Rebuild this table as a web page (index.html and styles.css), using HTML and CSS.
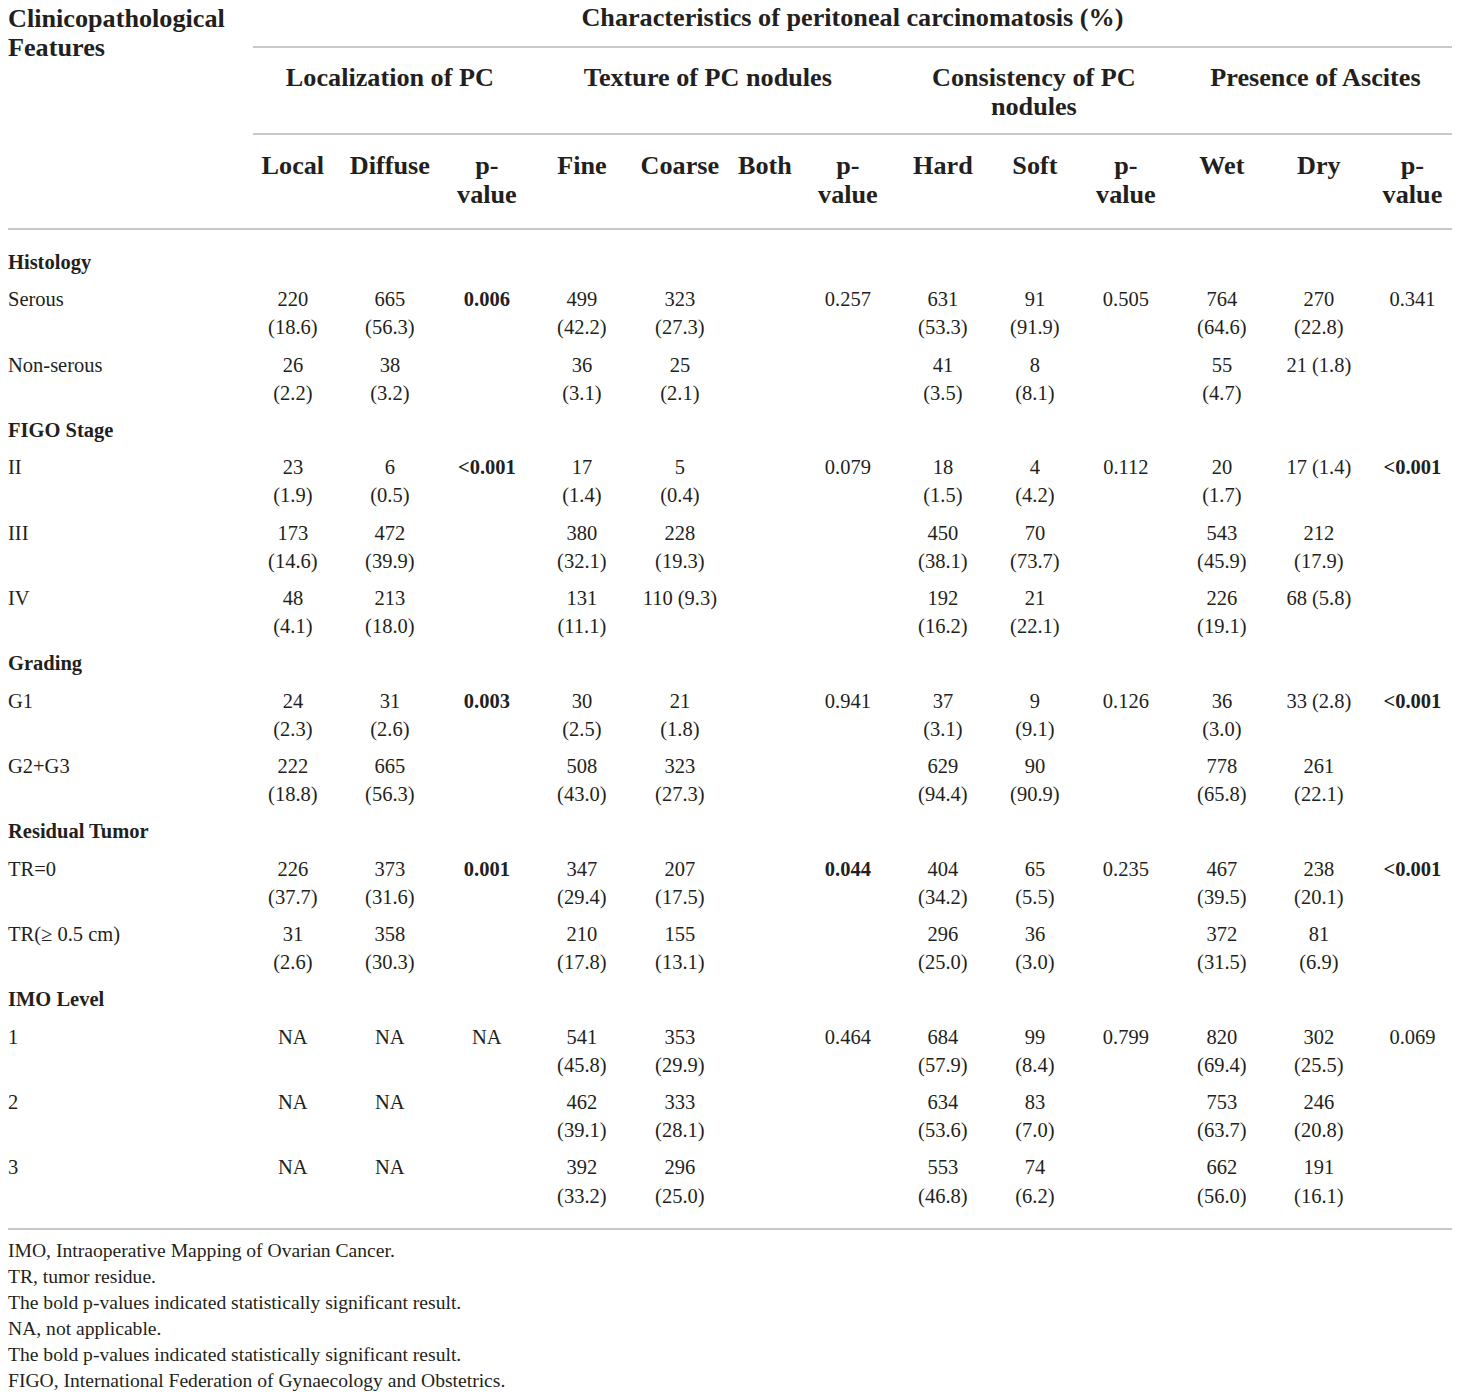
FILE: index.html
```html
<!DOCTYPE html>
<html lang="en">
<head>
  <meta charset="UTF-8">
  <title>Characteristics of peritoneal carcinomatosis</title>
  <link rel="stylesheet" href="styles.css">
</head>
<body>

  <div class="table-wrap">
    <table class="pc-table">
      <colgroup>
        <col class="c-label">
        <col style="width:80px"><col style="width:114px"><col style="width:80px">
        <col style="width:110px"><col style="width:86px"><col style="width:84px"><col style="width:82px">
        <col style="width:108px"><col style="width:76px"><col style="width:106px">
        <col style="width:86px"><col style="width:108px"><col style="width:79px">
      </colgroup>
      <thead>
        <tr class="head-1">
          <th class="label-head" rowspan="3">Clinicopathological<br>Features</th>
          <th colspan="13" class="ruled">Characteristics of peritoneal carcinomatosis (%)</th>
        </tr>
        <tr class="head-2">
          <th colspan="3" class="ruled">Localization of PC</th>
          <th colspan="4" class="ruled">Texture of PC nodules</th>
          <th colspan="3" class="ruled">Consistency of PC<br>nodules</th>
          <th colspan="3" class="ruled">Presence of Ascites</th>
        </tr>
        <tr class="head-3">
          <th>Local</th>
          <th>Diffuse</th>
          <th>p-<br>value</th>
          <th>Fine</th>
          <th>Coarse</th>
          <th>Both</th>
          <th>p-<br>value</th>
          <th>Hard</th>
          <th>Soft</th>
          <th>p-<br>value</th>
          <th>Wet</th>
          <th>Dry</th>
          <th>p-<br>value</th>
        </tr>
      </thead>
      <tbody>
        <tr class="section first">
          <td colspan="14">Histology</td>
        </tr>
        <tr>
          <td>Serous</td>
          <td>220<br>(18.6)</td><td>665<br>(56.3)</td><td><b>0.006</b></td>
          <td>499<br>(42.2)</td><td>323<br>(27.3)</td><td></td><td>0.257</td>
          <td>631<br>(53.3)</td><td>91<br>(91.9)</td><td>0.505</td>
          <td>764<br>(64.6)</td><td>270<br>(22.8)</td><td>0.341</td>
        </tr>
        <tr>
          <td>Non-serous</td>
          <td>26<br>(2.2)</td><td>38<br>(3.2)</td><td></td>
          <td>36<br>(3.1)</td><td>25<br>(2.1)</td><td></td><td></td>
          <td>41<br>(3.5)</td><td>8<br>(8.1)</td><td></td>
          <td>55<br>(4.7)</td><td>21 (1.8)</td><td></td>
        </tr>
        <tr class="section">
          <td colspan="14">FIGO Stage</td>
        </tr>
        <tr>
          <td>II</td>
          <td>23<br>(1.9)</td><td>6<br>(0.5)</td><td><b>&lt;0.001</b></td>
          <td>17<br>(1.4)</td><td>5<br>(0.4)</td><td></td><td>0.079</td>
          <td>18<br>(1.5)</td><td>4<br>(4.2)</td><td>0.112</td>
          <td>20<br>(1.7)</td><td>17 (1.4)</td><td><b>&lt;0.001</b></td>
        </tr>
        <tr>
          <td>III</td>
          <td>173<br>(14.6)</td><td>472<br>(39.9)</td><td></td>
          <td>380<br>(32.1)</td><td>228<br>(19.3)</td><td></td><td></td>
          <td>450<br>(38.1)</td><td>70<br>(73.7)</td><td></td>
          <td>543<br>(45.9)</td><td>212<br>(17.9)</td><td></td>
        </tr>
        <tr>
          <td>IV</td>
          <td>48<br>(4.1)</td><td>213<br>(18.0)</td><td></td>
          <td>131<br>(11.1)</td><td>110 (9.3)</td><td></td><td></td>
          <td>192<br>(16.2)</td><td>21<br>(22.1)</td><td></td>
          <td>226<br>(19.1)</td><td>68 (5.8)</td><td></td>
        </tr>
        <tr class="section">
          <td colspan="14">Grading</td>
        </tr>
        <tr>
          <td>G1</td>
          <td>24<br>(2.3)</td><td>31<br>(2.6)</td><td><b>0.003</b></td>
          <td>30<br>(2.5)</td><td>21<br>(1.8)</td><td></td><td>0.941</td>
          <td>37<br>(3.1)</td><td>9<br>(9.1)</td><td>0.126</td>
          <td>36<br>(3.0)</td><td>33 (2.8)</td><td><b>&lt;0.001</b></td>
        </tr>
        <tr>
          <td>G2+G3</td>
          <td>222<br>(18.8)</td><td>665<br>(56.3)</td><td></td>
          <td>508<br>(43.0)</td><td>323<br>(27.3)</td><td></td><td></td>
          <td>629<br>(94.4)</td><td>90<br>(90.9)</td><td></td>
          <td>778<br>(65.8)</td><td>261<br>(22.1)</td><td></td>
        </tr>
        <tr class="section">
          <td colspan="14">Residual Tumor</td>
        </tr>
        <tr>
          <td>TR=0</td>
          <td>226<br>(37.7)</td><td>373<br>(31.6)</td><td><b>0.001</b></td>
          <td>347<br>(29.4)</td><td>207<br>(17.5)</td><td></td><td><b>0.044</b></td>
          <td>404<br>(34.2)</td><td>65<br>(5.5)</td><td>0.235</td>
          <td>467<br>(39.5)</td><td>238<br>(20.1)</td><td><b>&lt;0.001</b></td>
        </tr>
        <tr>
          <td>TR(&ge; 0.5 cm)</td>
          <td>31<br>(2.6)</td><td>358<br>(30.3)</td><td></td>
          <td>210<br>(17.8)</td><td>155<br>(13.1)</td><td></td><td></td>
          <td>296<br>(25.0)</td><td>36<br>(3.0)</td><td></td>
          <td>372<br>(31.5)</td><td>81<br>(6.9)</td><td></td>
        </tr>
        <tr class="section">
          <td colspan="14">IMO Level</td>
        </tr>
        <tr>
          <td>1</td>
          <td>NA</td><td>NA</td><td>NA</td>
          <td>541<br>(45.8)</td><td>353<br>(29.9)</td><td></td><td>0.464</td>
          <td>684<br>(57.9)</td><td>99<br>(8.4)</td><td>0.799</td>
          <td>820<br>(69.4)</td><td>302<br>(25.5)</td><td>0.069</td>
        </tr>
        <tr>
          <td>2</td>
          <td>NA</td><td>NA</td><td></td>
          <td>462<br>(39.1)</td><td>333<br>(28.1)</td><td></td><td></td>
          <td>634<br>(53.6)</td><td>83<br>(7.0)</td><td></td>
          <td>753<br>(63.7)</td><td>246<br>(20.8)</td><td></td>
        </tr>
        <tr class="last">
          <td>3</td>
          <td>NA</td><td>NA</td><td></td>
          <td>392<br>(33.2)</td><td>296<br>(25.0)</td><td></td><td></td>
          <td>553<br>(46.8)</td><td>74<br>(6.2)</td><td></td>
          <td>662<br>(56.0)</td><td>191<br>(16.1)</td><td></td>
        </tr>
      </tbody>
    </table>

    <div class="notes">
      <p>IMO, Intraoperative Mapping of Ovarian Cancer.</p>
      <p>TR, tumor residue.</p>
      <p>The bold p-values indicated statistically significant result.</p>
      <p>NA, not applicable.</p>
      <p>The bold p-values indicated statistically significant result.</p>
      <p>FIGO, International Federation of Gynaecology and Obstetrics.</p>
    </div>
  </div>

</body>
</html>
```

FILE: styles.css
```css
body {
  margin: 0;
  background: #fff;
  color: #231f20;
  font-family: "Liberation Serif", "Times New Roman", serif;
}

.table-wrap {
  padding: 0 8px;
}

.pc-table {
  width: 1444px;
  border-collapse: collapse;
  table-layout: fixed;
  font-size: 20.5px;
  line-height: 28.2px;
}

.pc-table th {
  font-size: 26.2px;
  line-height: 29px;
  font-weight: bold;
  text-align: center;
  vertical-align: top;
  padding: 0;
  white-space: nowrap;
}

.pc-table th.label-head {
  text-align: left;
  padding-top: 4px;
}

.pc-table th.ruled {
  border-bottom: 2px solid #c9c9c9;
}

.head-1 th {
  padding: 3px 0 14px;
}

.head-2 th {
  padding: 15px 0 12px;
}

.head-3 th {
  padding: 16px 0 19px;
}

.pc-table thead {
  border-bottom: 2px solid #c9c9c9;
}

.pc-table td {
  padding: 4px 0 5px;
  text-align: center;
  vertical-align: top;
  white-space: nowrap;
}

.pc-table td:first-child {
  text-align: left;
}

.pc-table td b {
  font-weight: bold;
}

.section td {
  font-weight: bold;
}

.section.first td {
  padding-top: 18px;
}

.last td {
  padding-bottom: 18px;
}

.pc-table tbody {
  border-bottom: 2px solid #c9c9c9;
}

.notes {
  margin-top: 8px;
  font-size: 19.6px;
  line-height: 26px;
}

.notes p {
  margin: 0;
}
```
